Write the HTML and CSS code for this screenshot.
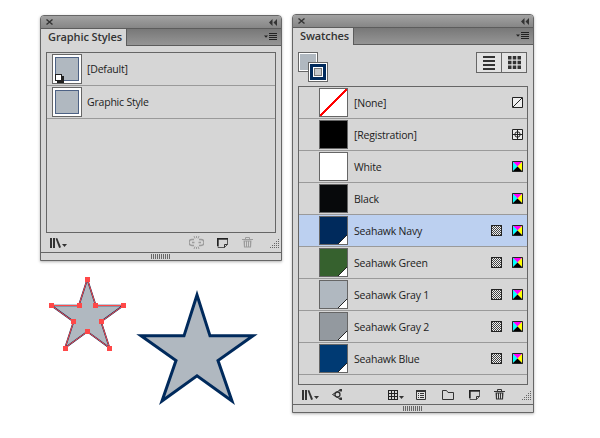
FILE: index.html
```html
<!DOCTYPE html>
<html lang="en">
<head>
  <meta charset="UTF-8">
  <title>Graphic Styles and Swatches</title>
  <link rel="stylesheet" href="styles.css">
</head>
<body>
  <svg class="defs" xmlns="http://www.w3.org/2000/svg">
    <defs>
      <pattern id="halftone" width="2" height="2" patternUnits="userSpaceOnUse"><path d="M0 0h2v2H0z" fill="#eee"/><path d="M0 0h1v1H0zM1 1h1v1H1z" fill="#444"/></pattern>
    </defs>
    <symbol id="i-close" viewBox="0 0 7 6"><path d="M.5.5l6 5M6.500.5l-6 5" stroke="#333" stroke-width="1.400" fill="none"/></symbol>
    <symbol id="i-collapse" viewBox="0 0 8 7"><path d="M3.500 0v7L0 3.500zM8 0v7L4.500 3.500z" fill="#333"/></symbol>
    <symbol id="i-menu" viewBox="0 0 13 8"><path d="M0 2.500h4L2 4.800z" fill="#222"/><path d="M5 .5h8M5 2.500h8M5 4.500h8M5 6.500h8" stroke="#222" fill="none"/></symbol>
    <symbol id="i-library" viewBox="0 0 11 10"><path d="M0 0h2v10H0zM3 0h2v10H3z" fill="#333"/><path d="M5.600.5l1.600-.5 3.800 9.300-1.900.7z" fill="#333"/></symbol>
    <symbol id="i-caret" viewBox="0 0 5 3"><path d="M0 0h5L2.500 3z" fill="#333"/></symbol>
    <symbol id="i-new" viewBox="0 0 11 10"><path d="M1 1h9.500v5.500l-3 3H1z" fill="#d6d6d6" stroke="#555"/><path d="M0 0h11v1.500H1.500V8H0z" fill="#222"/><path d="M7.500 9.500v-3h3" fill="none" stroke="#333"/></symbol>
    <symbol id="i-trash" viewBox="0 0 11 11"><path d="M0 2.500h11M3.500 2V.5h4V2" fill="none" stroke="currentColor"/><path d="M1.500 3.500h8l-.5 7H2z" fill="currentColor"/><path d="M3.500 4.500v5M5.500 4.500v5M7.500 4.500v5" stroke="#d6d6d6"/></symbol>
    <symbol id="i-unlink" viewBox="0 0 15 13"><path d="M5 3.500H3a3 3 0 0 0 0 6h2M10 3.500h2a3 3 0 0 1 0 6h-2M3 6.500h2.500M9.500 6.500H12" fill="none" stroke="#9c9c9c" stroke-width="1.500"/><path d="M5 0l1 2.500M10 0L9 2.500M7.500 0v2M5 13l1-2.500M10 13l-1-2.500M7.500 13v-2" stroke="#9c9c9c" fill="none"/></symbol>
    <symbol id="i-merge" viewBox="0 0 11 11"><circle cx="5.500" cy="5.500" r="2.500" fill="none" stroke="#333" stroke-width="1.300"/><path d="M.5 5.500L8 1M.5 5.500L8 10" stroke="#333" fill="none"/><path d="M7.500 0H10v2.500H7.500zM7.500 8.500H10V11H7.500z" fill="#333"/></symbol>
    <symbol id="i-grid" viewBox="0 0 10 10"><path d="M0 0h10v10H0z" fill="#222"/><path d="M1 1h2v2H1zM4 1h2v2H4zM7 1h2v2H7zM1 4h2v2H1zM4 4h2v2H4zM7 4h2v2H7zM1 7h2v2H1zM4 7h2v2H4zM7 7h2v2H7z" fill="#d6d6d6"/></symbol>
    <symbol id="i-cells" viewBox="0 0 13 13"><path d="M0 0h3.500v3.500H0zM4.750 0h3.500v3.500h-3.500zM9.500 0H13v3.500H9.500zM0 4.750h3.500v3.500H0zM4.750 4.750h3.500v3.500h-3.500zM9.500 4.750H13v3.500H9.500zM0 9.500h3.500V13H0zM4.750 9.500h3.500V13h-3.500zM9.500 9.500H13V13H9.500z" fill="#333"/></symbol>
    <symbol id="i-options" viewBox="0 0 10 10"><path d="M.5.500h9v9h-9z" fill="#e2e2e2" stroke="#333"/><path d="M0 0h10v2H0z" fill="#333"/><path d="M2 4h1M4 4h4M2 6h1M4 6h4M2 8h1M4 8h4" stroke="#333" transform="translate(0 -.5)"/></symbol>
    <symbol id="i-folder" viewBox="0 0 12 10"><path d="M.5 9.500V.5h4l1.500 2h5.500v7z" fill="#d6d6d6" stroke="#333"/></symbol>
    <symbol id="i-grip" viewBox="0 0 10 10"><path d="M8 0h1v1H8zM6 2h1v1H6zM8 2h1v1H8zM4 4h1v1H4zM6 4h1v1H6zM8 4h1v1H8zM2 6h1v1H2zM4 6h1v1H4zM6 6h1v1H6zM8 6h1v1H8zM0 8h1v1H0zM2 8h1v1H2zM4 8h1v1H4zM6 8h1v1H6zM8 8h1v1H8z" fill="#666"/></symbol>
    <symbol id="i-none" viewBox="0 0 11 11"><path d="M.5.500h10v10H.5z" fill="#eee" stroke="#222"/><path d="M1 10L10 1" stroke="#222" fill="none"/></symbol>
    <symbol id="i-reg" viewBox="0 0 11 11"><path d="M.5.500h10v10H.5z" fill="#eee" stroke="#222"/><circle cx="5.500" cy="5.500" r="2.700" fill="none" stroke="#222"/><path d="M5.500 1v9M1 5.500h9" stroke="#222" fill="none"/></symbol>
    <symbol id="i-cmyk" viewBox="0 0 11 11"><path d="M0 0h11L5.500 5.500z" fill="#f0f"/><path d="M0 0v11l5.500-5.500z" fill="#0ff"/><path d="M11 0v11L5.500 5.500z" fill="#ff0"/><path d="M0 11h11L5.500 5.500z" fill="#000"/><path d="M.5.500h10v10H.5z" fill="none" stroke="#222"/></symbol>
    <symbol id="i-spot" viewBox="0 0 11 11"><path d="M0 0h11v11H0z" fill="url(#halftone)"/><path d="M.5.500h10v10H.5z" fill="none" stroke="#222"/></symbol>
  </svg>

  <div class="column">
    <div class="panel panel-styles">
      <div class="titlebar">
        <svg class="ic-close"><use href="#i-close"/></svg>
        <svg class="ic-collapse"><use href="#i-collapse"/></svg>
      </div>
      <div class="tabbar">
        <div class="tab tab-styles">Graphic Styles</div>
        <svg class="ic-menu"><use href="#i-menu"/></svg>
      </div>
      <div class="panel-body">
        <div class="list list-styles">
          <div class="style-row">
            <div class="style-thumb"><div class="style-fill"></div><div class="linked"></div></div>
            <span class="label">[Default]</span>
          </div>
          <div class="style-row">
            <div class="style-thumb"><div class="style-fill"></div></div>
            <span class="label">Graphic Style</span>
          </div>
        </div>
      </div>
      <div class="footer">
        <svg class="ic-lib"><use href="#i-library"/></svg>
        <svg class="ic-caret"><use href="#i-caret"/></svg>
        <svg class="ic-unlink"><use href="#i-unlink"/></svg>
        <svg class="ic-new s-new"><use href="#i-new"/></svg>
        <svg class="ic-trash s-trash"><use href="#i-trash"/></svg>
        <svg class="ic-grip"><use href="#i-grip"/></svg>
      </div>
      <div class="gripbar"><div class="grip"></div></div>
    </div>

    <svg class="stars" viewBox="40 275 225 135" xmlns="http://www.w3.org/2000/svg">
      <path d="M87.300 279.300L95.800 305.500H123.300L101.050 321.670L109.550 347.800L87.300 331.660L65.050 347.800L73.550 321.670L51.300 305.500H78.800Z" fill="#b0b8c0" stroke="#002a5c" stroke-width="1.600"/>
      <path d="M87.300 279.300L95.800 305.500H123.300L101.050 321.670L109.550 347.800L87.300 331.660L65.050 347.800L73.550 321.670L51.300 305.500H78.800Z" fill="none" stroke="#ff4848"/>
      <path class="anchors" d="M85 277h5v5h-5zM93 303h5v5h-5zM121 303h5v5h-5zM99 319h5v5h-5zM107 346h5v5h-5zM85 329h5v5h-5zM63 346h5v5h-5zM71 319h5v5h-5zM49 303h5v5h-5zM77 303h5v5h-5z" fill="#ff4848"/>
      <path d="M197 295L210 335.840H253L218 360.500L232 401L197 375.800L162 401L176 360.500L141 335.840H184Z" fill="#b0b8c0" stroke="#002a5c" stroke-width="3" stroke-miterlimit="12"/>
    </svg>
  </div>

  <div class="panel panel-swatches">
    <div class="titlebar">
      <svg class="ic-close"><use href="#i-close"/></svg>
      <svg class="ic-collapse"><use href="#i-collapse"/></svg>
    </div>
    <div class="tabbar">
      <div class="tab tab-swatches">Swatches</div>
      <svg class="ic-menu"><use href="#i-menu"/></svg>
    </div>
    <div class="panel-body">
      <div class="swatch-tools">
        <div class="fill-stroke">
          <div class="fill-box"></div>
          <div class="stroke-box"><div class="stroke-hole"></div></div>
        </div>
        <div class="view-toggle">
          <div class="view-btn">
            <div class="view-lines"><i></i><i></i><i></i><i></i></div>
          </div>
          <div class="view-btn">
            <svg class="ic-view-grid"><use href="#i-cells"/></svg>
          </div>
        </div>
      </div>
      <div class="list list-swatches">
        <div class="swatch-row">
          <div class="swatch sw-none"></div><span class="label">[None]</span>
          <svg class="mode only"><use href="#i-none"/></svg>
        </div>
        <div class="swatch-row">
          <div class="swatch sw-reg"></div><span class="label">[Registration]</span>
          <svg class="mode only"><use href="#i-reg"/></svg>
        </div>
        <div class="swatch-row">
          <div class="swatch sw-white"></div><span class="label">White</span>
          <svg class="mode only"><use href="#i-cmyk"/></svg>
        </div>
        <div class="swatch-row">
          <div class="swatch sw-black"></div><span class="label">Black</span>
          <svg class="mode only"><use href="#i-cmyk"/></svg>
        </div>
        <div class="swatch-row selected">
          <div class="swatch global sw-navy"></div><span class="label">Seahawk Navy</span>
          <svg class="mode"><use href="#i-spot"/></svg><svg class="mode"><use href="#i-cmyk"/></svg>
        </div>
        <div class="swatch-row">
          <div class="swatch global sw-green"></div><span class="label">Seahawk Green</span>
          <svg class="mode"><use href="#i-spot"/></svg><svg class="mode"><use href="#i-cmyk"/></svg>
        </div>
        <div class="swatch-row">
          <div class="swatch global sw-gray1"></div><span class="label">Seahawk Gray 1</span>
          <svg class="mode"><use href="#i-spot"/></svg><svg class="mode"><use href="#i-cmyk"/></svg>
        </div>
        <div class="swatch-row">
          <div class="swatch global sw-gray2"></div><span class="label">Seahawk Gray 2</span>
          <svg class="mode"><use href="#i-spot"/></svg><svg class="mode"><use href="#i-cmyk"/></svg>
        </div>
        <div class="swatch-row">
          <div class="swatch global sw-blue"></div><span class="label">Seahawk Blue</span>
          <svg class="mode"><use href="#i-spot"/></svg><svg class="mode"><use href="#i-cmyk"/></svg>
        </div>
      </div>
    </div>
    <div class="footer">
      <svg class="ic-lib"><use href="#i-library"/></svg>
      <svg class="ic-caret"><use href="#i-caret"/></svg>
      <svg class="ic-merge"><use href="#i-merge"/></svg>
      <svg class="ic-grid"><use href="#i-grid"/></svg>
      <svg class="ic-caret"><use href="#i-caret"/></svg>
      <svg class="ic-options"><use href="#i-options"/></svg>
      <svg class="ic-folder"><use href="#i-folder"/></svg>
      <svg class="ic-new w-new"><use href="#i-new"/></svg>
      <svg class="ic-trash w-trash"><use href="#i-trash"/></svg>
      <svg class="ic-grip"><use href="#i-grip"/></svg>
    </div>
    <div class="gripbar"><div class="grip"></div></div>
  </div>
</body>
</html>
```

FILE: styles.css
```css
html, body {
  margin: 0;
  padding: 0;
}

body {
  width: 600px;
  height: 438px;
  overflow: hidden;
  background: #fff;
  display: flex;
  align-items: flex-start;
  gap: 10px;
  padding: 14px 0 0 40px;
  box-sizing: border-box;
  font-family: "Open Sans", sans-serif;
  font-size: 10.5px;
  letter-spacing: -0.2px;
  color: #1c1c1c;
}

.defs {
  position: absolute;
  width: 0;
  height: 0;
}

.column {
  display: flex;
  flex-direction: column;
  padding-top: 1px;
}

.stars {
  display: block;
  width: 225px;
  height: 135px;
  margin-top: 14px;
}

.panel {
  box-sizing: border-box;
  width: 242px;
  display: flex;
  flex-direction: column;
  background: #d6d6d6;
  border: 1px solid #666;
  border-radius: 4px 4px 0 0;
  box-shadow: 0 1px 3px rgba(0, 0, 0, 0.3);
}

.panel-styles {
  height: 246px;
}

.panel-swatches {
  height: 399px;
}

.titlebar {
  height: 12px;
  flex: none;
  display: flex;
  align-items: center;
  justify-content: space-between;
  padding: 0 4px 0 5px;
  background: linear-gradient(to bottom, #a2a2a2, #868686);
  border-bottom: 1px solid #5c5c5c;
  border-radius: 3px 3px 0 0;
}

.ic-close {
  width: 7px;
  height: 6px;
}

.ic-collapse {
  width: 8px;
  height: 7px;
}

.tabbar {
  height: 16px;
  flex: none;
  display: flex;
  justify-content: space-between;
  align-items: center;
  padding-right: 4px;
  background: linear-gradient(to bottom, #787878, #959595);
  border-bottom: 1px solid #5c5c5c;
}

.tab {
  box-sizing: border-box;
  height: 17px;
  align-self: flex-start;
  margin-bottom: -1px;
  padding-left: 7px;
  line-height: 16px;
  font-weight: 600;
  font-size: 11px;
  letter-spacing: -0.1px;
  white-space: nowrap;
  color: #333;
  background: #d6d6d6;
  border-right: 1px solid #5c5c5c;
}

.tab-styles {
  width: 86px;
}

.tab-swatches {
  width: 61px;
}

.ic-menu {
  width: 13px;
  height: 8px;
}

.panel-body {
  flex: none;
  display: flex;
  flex-direction: column;
  padding: 6px 5px 0;
}

.list {
  box-sizing: border-box;
  border: 1px solid #666;
}

.list-styles {
  height: 181px;
}

.style-row {
  height: 32px;
  display: flex;
  align-items: center;
  padding-left: 5px;
  border-bottom: 1px solid #9a9a9a;
}

.style-thumb {
  position: relative;
  box-sizing: border-box;
  width: 30px;
  height: 30px;
  padding: 2px;
  background: #fff;
  border: 1px solid #666;
}

.style-fill {
  box-sizing: border-box;
  height: 100%;
  background: #b0b8c0;
  border: 1px solid #4d6285;
}

.linked {
  position: absolute;
  left: 2px;
  bottom: 2px;
  width: 5px;
  height: 5px;
  background: #fff;
  border: 1px solid #222;
  box-shadow: 2px 2px 0 #222;
}

.label {
  margin-left: 6px;
  white-space: nowrap;
}

.style-row .label {
  margin: 0 0 1px 5px;
}

.swatch-tools {
  height: 35px;
  flex: none;
  display: flex;
  justify-content: space-between;
  align-items: flex-start;
}

.fill-stroke {
  display: grid;
  grid-template-columns: 10px 10px 10px;
  grid-template-rows: 10px 10px 10px;
  margin-top: 1px;
}

.fill-box {
  grid-area: 1 / 1 / 3 / 3;
  box-sizing: border-box;
  width: 20px;
  height: 20px;
  background: #b0b8c0;
  border: 1px solid #666;
  outline: 1px solid #fff;
  outline-offset: -2px;
}

.stroke-box {
  grid-area: 2 / 2 / 4 / 4;
  box-sizing: border-box;
  width: 20px;
  height: 20px;
  padding: 2px;
  background: #002a5c;
  border: 1px solid #666;
  outline: 1px solid #fff;
  outline-offset: -2px;
  display: flex;
  justify-content: center;
  align-items: center;
}

.stroke-hole {
  box-sizing: border-box;
  width: 8px;
  height: 8px;
  background: #c4c8cc;
  border: 1px solid #777;
  outline: 1px solid #fff;
}

.view-toggle {
  display: flex;
  margin: 1px 1px 0 0;
  height: 21px;
  border: 1px solid #666;
  box-sizing: border-box;
}

.view-btn {
  width: 24px;
  display: flex;
  align-items: center;
  justify-content: center;
  background: #e2e2e2;
}

.view-btn + .view-btn {
  border-left: 1px solid #666;
}

.view-lines {
  width: 12px;
  display: flex;
  flex-direction: column;
  gap: 2px;
}

.view-lines i {
  display: block;
  height: 2px;
  background: #333;
}

.ic-view-grid {
  width: 13px;
  height: 13px;
}

.list-swatches {
  height: 299px;
}

.swatch-row {
  height: 31px;
  display: flex;
  align-items: center;
  padding: 0 4px 0 20px;
  border-bottom: 1px solid #9a9a9a;
}

.swatch-row.selected {
  background: #bcd0f0;
}

.swatch {
  position: relative;
  box-sizing: border-box;
  width: 29px;
  height: 29px;
  flex: none;
  border: 1px solid #666;
}

.swatch.global::after {
  content: "";
  position: absolute;
  right: 0;
  bottom: 0;
  width: 9px;
  height: 9px;
  background: linear-gradient(to bottom right, transparent 47%, #222 47%, #222 53%, #fff 53%);
}

.sw-none {
  background: linear-gradient(to bottom right, #fff 47%, #f00 47%, #f00 53%, #fff 53%);
}

.sw-reg {
  background: #000;
}

.sw-white {
  background: #fff;
}

.sw-black {
  background: #07090b;
}

.sw-navy {
  background: #002a5c;
}

.sw-green {
  background: #36612e;
}

.sw-gray1 {
  background: #b0b8c0;
}

.sw-gray2 {
  background: #93999f;
}

.sw-blue {
  background: #003a73;
}

.mode {
  width: 11px;
  height: 11px;
  flex: none;
  margin-left: 10px;
}

.swatch-row .label {
  flex: 1;
}

.footer {
  height: 19px;
  flex: none;
  display: flex;
  align-items: center;
  padding: 0 1px 0 9px;
}

.ic-lib {
  width: 11px;
  height: 10px;
}

.ic-caret {
  width: 5px;
  height: 3px;
  margin: 6px 0 0 1px;
}

.ic-unlink {
  width: 15px;
  height: 13px;
  margin-left: 122px;
}

.ic-new {
  width: 11px;
  height: 10px;
}

.s-new {
  margin-left: 13px;
}

.ic-trash {
  width: 11px;
  height: 11px;
  color: #9c9c9c;
}

.s-trash {
  margin-left: 14px;
}

.ic-merge {
  width: 11px;
  height: 11px;
  margin-left: 13px;
}

.ic-grid {
  width: 10px;
  height: 10px;
  margin-left: 45px;
}

.ic-options {
  width: 10px;
  height: 10px;
  margin-left: 12px;
}

.ic-folder {
  width: 12px;
  height: 10px;
  margin-left: 16px;
}

.w-new {
  margin-left: 15px;
}

.w-trash {
  margin-left: 14px;
  color: #333;
}

.ic-grip {
  width: 10px;
  height: 10px;
  margin: 2px 0 0 auto;
}

.gripbar {
  flex: 1;
  display: flex;
  align-items: center;
  justify-content: center;
  border-top: 1px solid #666;
}

.grip {
  width: 20px;
  height: 5px;
  background: repeating-linear-gradient(to right, #666 0, #666 1px, transparent 1px, transparent 2px);
}
```
